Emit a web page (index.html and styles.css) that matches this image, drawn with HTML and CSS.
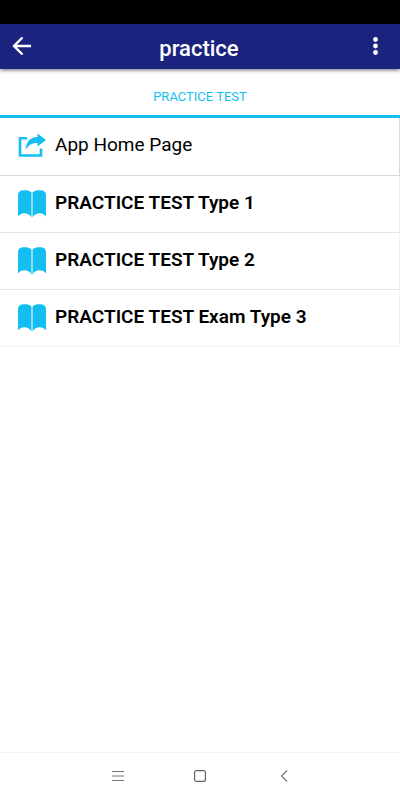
FILE: index.html
```html
<!DOCTYPE html>
<html lang="en">
<head>
    <meta charset="UTF-8">
    <meta name="viewport" content="width=device-width, initial-scale=1.0">
    <title>practice</title>
    <link rel="stylesheet" href="styles.css">
</head>
<body>
    <div class="status-bar"></div>
    <header class="app-bar">
        <button class="icon-btn" type="button" aria-label="Back">
            <svg width="20" height="20" viewBox="0 0 20 20"><path d="M19 9H2M10.500 .5L2 9l8.500 8.500" fill="none" stroke="#fff" stroke-width="2.400"/></svg>
        </button>
        <h1>practice</h1>
        <button class="icon-btn" type="button" aria-label="More options">
            <svg width="20" height="20" viewBox="0 0 20 20" fill="#fff"><circle cx="9.500" cy="2.500" r="2.400"/><circle cx="9.500" cy="9" r="2.400"/><circle cx="9.500" cy="15.500" r="2.400"/></svg>
        </button>
    </header>

    <nav class="tabs">
        <a href="#tests" class="tab">PRACTICE TEST</a>
    </nav>

    <main class="content">
        <ul class="menu" id="tests">
            <li class="home">
                <a href="#">
                    <svg width="28" height="28" viewBox="0 0 28 28"><path d="M9 6.300H2V23.500h21v-7" fill="none" stroke="#13bff0" stroke-width="2.600"/><path d="M19.500 1.500L28 8 19.500 14.500v-3.500C14 10.700 10.500 13 7.500 18 8 10 12 5.300 19.500 5z" fill="#13bff0"/></svg>
                    <span>App Home Page</span>
                </a>
            </li>
            <li>
                <a href="#">
                    <svg width="28" height="28" viewBox="0 0 28 28" fill="#13bff0"><path d="M13.500 27.500V2.500C11.500 .300 8 0 5 .300 1.500 .800 0 2.500 0 5v21.500c2-2.500 4.500-3.500 7-3.200 3 .400 5 1.700 6.500 4.200z"/><path d="M14.500 27.500V2.500C16.500 .300 20 0 23 .300c3.500 .500 5 2.200 5 4.700v21.500c-2-2.500-4.500-3.500-7-3.200-3 .400-5 1.700-6.500 4.200z"/></svg>
                    <strong>PRACTICE TEST Type 1</strong>
                </a>
            </li>
            <li>
                <a href="#">
                    <svg width="28" height="28" viewBox="0 0 28 28" fill="#13bff0"><path d="M13.500 27.500V2.500C11.500 .300 8 0 5 .300 1.500 .800 0 2.500 0 5v21.500c2-2.500 4.500-3.500 7-3.200 3 .400 5 1.700 6.500 4.200z"/><path d="M14.500 27.500V2.500C16.500 .300 20 0 23 .300c3.500 .500 5 2.200 5 4.700v21.500c-2-2.500-4.500-3.500-7-3.200-3 .400-5 1.700-6.500 4.200z"/></svg>
                    <strong>PRACTICE TEST Type 2</strong>
                </a>
            </li>
            <li>
                <a href="#">
                    <svg width="28" height="28" viewBox="0 0 28 28" fill="#13bff0"><path d="M13.500 27.500V2.500C11.500 .300 8 0 5 .300 1.500 .800 0 2.500 0 5v21.500c2-2.500 4.500-3.500 7-3.200 3 .400 5 1.700 6.500 4.200z"/><path d="M14.500 27.500V2.500C16.500 .300 20 0 23 .300c3.500 .500 5 2.200 5 4.700v21.500c-2-2.500-4.500-3.500-7-3.200-3 .400-5 1.700-6.500 4.200z"/></svg>
                    <strong>PRACTICE TEST Exam Type 3</strong>
                </a>
            </li>
        </ul>
    </main>

    <footer class="system-nav">
        <button class="icon-btn" type="button" aria-label="Recent apps">
            <svg width="12" height="14" viewBox="0 0 12 14"><path d="M0 2.500h12M0 7h12M0 11.500h12" stroke="#777" fill="none"/></svg>
        </button>
        <button class="icon-btn" type="button" aria-label="Home">
            <svg width="12" height="14" viewBox="0 0 12 14"><rect x=".6" y="1.600" width="10.800" height="10.800" rx="2" stroke="#666" stroke-width="1.200" fill="none"/></svg>
        </button>
        <button class="icon-btn" type="button" aria-label="Go back">
            <svg width="12" height="14" viewBox="0 0 12 14"><path d="M11 1.500L5.500 7l5.500 5.500" stroke="#777" stroke-width="1.200" fill="none"/></svg>
        </button>
    </footer>
</body>
</html>
```

FILE: styles.css
```css
* { box-sizing: border-box; }
body { margin: 0; min-height: 100vh; display: flex; flex-direction: column; background: #fff; color: #000; font-family: Roboto, "Liberation Sans", sans-serif; }
a { color: inherit; text-decoration: none; }
svg { display: block; flex: none; }
.icon-btn { padding: 0; border: none; background: none; cursor: pointer; }

.status-bar { height: 24px; background: #000; }
.app-bar { display: flex; align-items: center; justify-content: space-between; height: 45px; padding: 0 14px 0 12px; background: #1a237e; color: #fff; box-shadow: 0 1px 4px rgba(0, 0, 0, 0.6); }
.app-bar h1 { margin: 0; padding-top: 4px; font-size: 22px; line-height: 28px; font-weight: 500; }

.tabs { border-bottom: 3px solid #13bff0; }
.tab { display: block; padding: 20px 0 10px; color: #13bff0; font-size: 13px; line-height: 16px; text-align: center; }

.content { flex: 1; }
.menu { margin: 0; padding: 0; list-style: none; }
.menu li { border-right: 1px solid #f0f0f0; border-bottom: 1px solid #e4e4e4; }
.menu li:last-child { border-bottom-color: #f4f4f4; }
.menu .home { padding-bottom: 1px; border-color: #d8d8d8; }
.menu a { display: flex; align-items: center; gap: 9px; padding: 14px 18px; font-size: 19px; line-height: 24px; }
.menu span, .menu strong { padding-bottom: 2px; }
.menu strong { font-weight: 600; }

.system-nav { display: flex; justify-content: center; gap: 70px; padding: 16px 0 17px; border-top: 1px solid #f4f4f4; }
```
